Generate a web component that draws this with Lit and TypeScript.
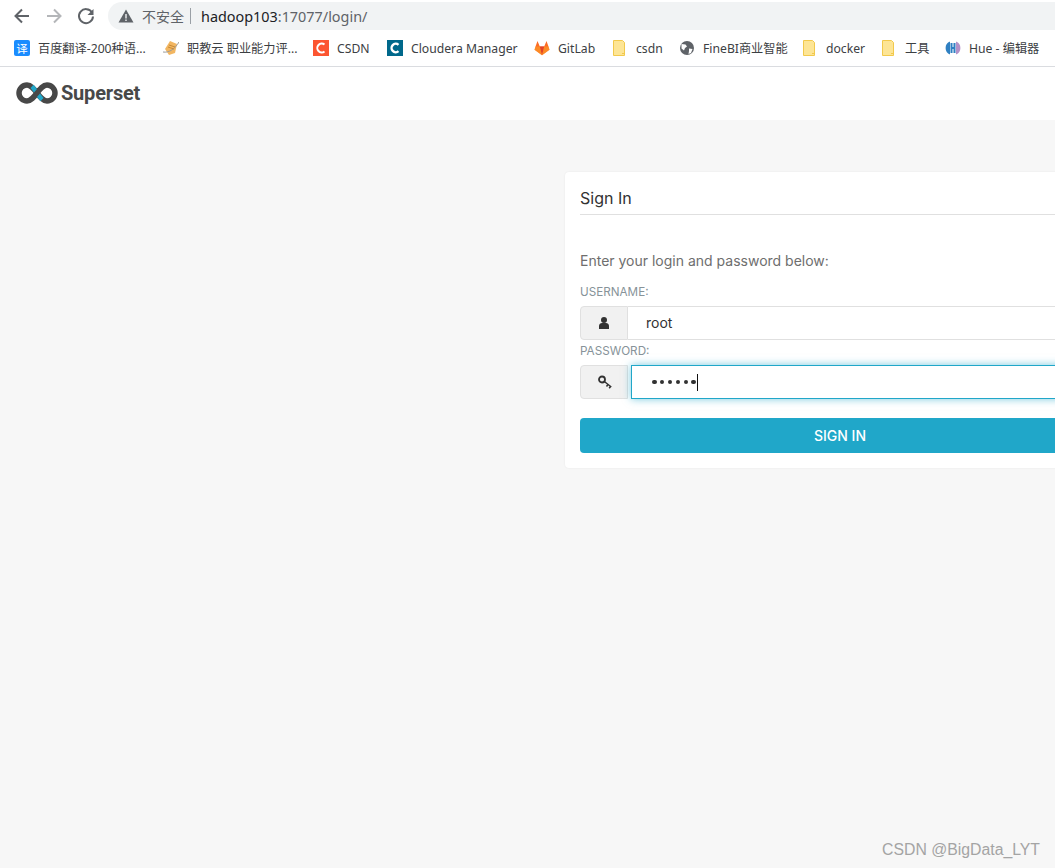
import { LitElement, html, css, svg } from "lit";
import { customElement } from "lit/decorators.js";

const folder = svg`<path d="M1.500 0.500h9l2 2v13h-11z" fill="#fde595" stroke="#f2c94c" stroke-width="1"/><path d="M10 13.500h2.500" stroke="#f2c94c"/>`;
const icons: Record<string, any> = {
  fanyi: svg`<rect x="0" y="0" width="16" height="16" rx="2" fill="#1a8cff"/><text x="8" y="12.500" font-size="11.500" fill="#fff" text-anchor="middle" font-family="Noto Sans CJK SC">译</text>`,
  zhijiao: svg`<path d="M2 9l5-8 7 3-2 9-6 2z" fill="#f2b661"/><path d="M0 12c6 1 12-3 16-10" stroke="#9a9a9a" fill="none"/><path d="M5 7l6 2M6 5l6 2" stroke="#c98a35"/>`,
  csdn: svg`<rect width="16" height="16" fill="#fc5531"/><path d="M11.500 4.600A4.400 4.400 0 1 0 11.500 11.400" stroke="#fff" stroke-width="2" fill="none"/>`,
  cloudera: svg`<rect width="16" height="16" fill="#00688b"/><path d="M11.500 4.800A4.200 4.200 0 1 0 11.500 11.200" stroke="#fff" stroke-width="2.400" fill="none"/>`,
  gitlab: svg`<path d="M8 15.200L.5 9.800l1-3.300L3.500 1l2.300 5.500h4.400L12.500 1l2 5.500 1 3.300z" fill="#fc6d26"/><path d="M8 15.200L5.800 6.500h4.400z" fill="#e24329"/><path d="M8 15.200L.5 9.800l1-3.300h4.300zM8 15.200l7.500-5.400-1-3.300h-4.300z" fill="#fca326" opacity=".55"/>`,
  folder,
  globe: svg`<circle cx="8" cy="8" r="7" fill="#5f6368"/><path d="M2.500 4l4 .5 1.500 2-2 1.500-1 2.500-2.500-2zM10 8.500l3.500.5-1.500 4-2.500 1 .5-3z" fill="#fff"/>`,
  hue: svg`<path d="M5 1.500A7 7 0 0 0 5 14.500z" fill="#2f80c2"/><path d="M11 1.500A7 7 0 0 1 11 14.500z" fill="#b491c8"/><path d="M6.500 3v10M9.500 3v10M6.500 8h3" stroke="#2f80c2" stroke-width="2"/>`,
};

const bookmarks = [
  { i: "fanyi", t: "百度翻译-200种语...", w: 149 },
  { i: "zhijiao", t: "职教云 职业能力评...", w: 150 },
  { i: "csdn", t: "CSDN", w: 74 },
  { i: "cloudera", t: "Cloudera Manager", w: 147 },
  { i: "gitlab", t: "GitLab", w: 78 },
  { i: "folder", t: "csdn", w: 67 },
  { i: "globe", t: "FineBI商业智能", w: 123 },
  { i: "folder", t: "docker", w: 79 },
  { i: "folder", t: "工具", w: 64 },
  { i: "hue", t: "Hue - 编辑器", w: 110 },
];

@customElement("app-root")
export class AppRoot extends LitElement {
  static styles = css`
    :host {
      display: block;
      position: relative;
      width: 1055px;
      height: 868px;
      overflow: hidden;
      background: #f7f7f7;
      font-family: Inter, "Noto Sans CJK SC", sans-serif;
    }
    .chrome {
      background: #fff;
      height: 66px;
      border-bottom: 1px solid #dadce0;
    }
    .toolbar {
      height: 32px;
      display: flex;
      align-items: flex-start;
      padding-left: 12px;
    }
    .nav-btns {
      display: flex;
      gap: 12px;
      padding-top: 6px;
    }
    .nav-btns svg {
      display: block;
      width: 20px;
      height: 20px;
    }
    .omnibox {
      margin: 2px 0 0 12px;
      flex: 1;
      height: 28px;
      background: #f1f3f4;
      border-radius: 14px 0 0 14px;
      display: flex;
      align-items: center;
      padding-left: 10px;
      font-family: "Noto Sans", "Noto Sans CJK SC", sans-serif;
      font-size: 14.4px;
      color: #5f6368;
    }
    .omnibox svg {
      width: 16px;
      height: 16px;
      margin-right: 8px;
    }
    .lock {
      font-size: 14px;
    }
    .sep {
      width: 1px;
      height: 16px;
      background: #9aa0a6;
      margin: 0 10px 0 6px;
    }
    .host {
      color: #202124;
    }
    .bookmarks {
      height: 32px;
      display: flex;
      align-items: center;
      padding-left: 14px;
      font-family: "Noto Sans", "Noto Sans CJK SC", sans-serif;
      font-size: 12.2px;
      color: #3c4043;
    }
    .bm {
      display: flex;
      align-items: center;
      gap: 8px;
      flex: none;
      white-space: nowrap;
    }
    .bm svg {
      width: 16px;
      height: 16px;
      flex: none;
    }
    .navbar {
      height: 53px;
      background: #fff;
      display: flex;
      align-items: center;
      padding: 0 0 2px 16px;
      box-sizing: border-box;
      gap: 3px;
    }
    .navbar svg {
      width: 42px;
      height: 22px;
      display: block;
    }
    .brand {
      font-family: Roboto, sans-serif;
      font-weight: 700;
      font-size: 20px;
      letter-spacing: -0.2px;
      color: #484848;
    }
    .card {
      box-sizing: border-box;
      width: 550px;
      margin: 52px 0 0 565px;
      height: 296px;
      background: #fff;
      border-radius: 4px;
      box-shadow: 0 0 2px rgba(0, 0, 0, 0.08);
      padding: 15px;
    }
    .title {
      font-size: 16px;
      line-height: 22px;
      height: 27px;
      color: #323232;
      border-bottom: 1px solid #e0e0e0;
    }
    .intro {
      margin-top: 36px;
      font-size: 14px;
      line-height: 20px;
      color: #6e6e6e;
    }
    .label {
      font-size: 11.7px;
      line-height: 16px;
      color: #879399;
      margin-top: 13px;
    }
    .label.second {
      margin-top: 3px;
    }
    .group {
      display: flex;
      height: 34px;
      margin-top: 6px;
    }
    .addon {
      box-sizing: border-box;
      width: 48px;
      flex: none;
      background: #f1f1f1;
      border: 1px solid #e0e0e0;
      border-radius: 4px 0 0 4px;
      display: flex;
      align-items: center;
      justify-content: center;
    }
    .addon svg {
      width: 14px;
      height: 14px;
    }
    .key {
      margin-left: 2px;
    }
    .field {
      box-sizing: border-box;
      flex: 1;
      border: 1px solid #e0e0e0;
      border-left: none;
      padding: 0 0 2px 18px;
      display: flex;
      align-items: center;
      font-size: 14px;
      color: #323232;
    }
    .field.focus {
      margin-left: 3px;
      border: 1px solid #20a7c9;
      padding: 0 0 0 20px;
      box-shadow: 0 0 8px rgba(32, 167, 201, 0.6);
    }
    .caret {
      width: 1px;
      height: 17px;
      margin-left: 1px;
      background: #111;
    }
    .dots {
      display: flex;
      gap: 3.4px;
    }
    .dot {
      width: 4.5px;
      height: 4.5px;
      border-radius: 50%;
      background: #323232;
    }
    .btn {
      margin-top: 19px;
      height: 35px;
      background: #20a7c9;
      border-radius: 4px;
      color: #fff;
      font-size: 14px;
      font-weight: 500;
      display: flex;
      align-items: center;
      justify-content: center;
    }
    .watermark {
      position: absolute;
      right: 15px;
      bottom: 9px;
      font-family: "Liberation Sans", sans-serif;
      font-size: 15.8px;
      color: #a4a4a4;
    }
  `;

  render() {
    return html`
      <div class="chrome">
        <div class="toolbar">
          <div class="nav-btns">
            <svg viewBox="0 0 20 20"><path d="M17 10H4.500M10 3.500L3.500 10l6.500 6.500" fill="none" stroke="#5f6368" stroke-width="2"/></svg>
            <svg viewBox="0 0 20 20"><path d="M3 10h12.500M10 3.500l6.500 6.500-6.500 6.500" fill="none" stroke="#b4b6b9" stroke-width="2"/></svg>
            <svg viewBox="0 0 20 20"><path d="M16 6.500A7 7 0 1 0 17 10.500" fill="none" stroke="#5f6368" stroke-width="2"/><path d="M17.500 3v6h-6z" fill="#5f6368"/></svg>
          </div>
          <div class="omnibox">
            <svg viewBox="0 0 16 16"><path d="M8 1.500L15.500 14.500H.5z" fill="#5f6368"/><path d="M8 6v4.500M8 11.500v1.500" stroke="#f1f3f4" stroke-width="1.400"/></svg>
            <span class="lock">不安全</span><span class="sep"></span><span class="host">hadoop103</span><span>:17077/login/</span>
          </div>
        </div>
        <div class="bookmarks">
          ${bookmarks.map(
            (b) => html`<div class="bm" style="width:${b.w}px">
              <svg viewBox="0 0 16 16">${icons[b.i]}</svg><span>${b.t}</span>
            </div>`
          )}
        </div>
      </div>
      <div class="navbar">
        <svg viewBox="0 0 42 22">
          <path d="M21 11c-3-4-6-8-10-8a8 8 0 0 0 0 16c4 0 7-4 10-8s6-8 10-8a8 8 0 0 1 0 16c-4 0-7-4-10-8z" fill="none" stroke="#484848" stroke-width="5.500"/>
          <path d="M14.500 6l3.500 4.500 3-3.500-3.500-4.200zM27.500 16l-3.500-4.500-3 3.500 3.500 4.200z" fill="#20a7c9"/>
        </svg>
        <span class="brand">Superset</span>
      </div>
      <div class="card">
        <div class="title">Sign In</div>
        <div class="intro">Enter your login and password below:</div>
        <div class="label">USERNAME:</div>
        <div class="group">
          <div class="addon">
            <svg viewBox="0 0 14 14"><circle cx="7" cy="4" r="3" fill="#323232"/><path d="M2 13v-3c0-2 1.500-3 3-3h4c1.500 0 3 1 3 3v3z" fill="#323232"/></svg>
          </div>
          <div class="field">root</div>
        </div>
        <div class="label second">PASSWORD:</div>
        <div class="group">
          <div class="addon">
            <svg class="key" viewBox="0 0 14 14"><circle cx="4" cy="4.500" r="3" fill="none" stroke="#323232" stroke-width="1.800"/><path d="M6.300 6.500l7 5.500M10 9.500l-1.500 2M12.500 11.500l-1.300 1.800" fill="none" stroke="#323232" stroke-width="1.500"/></svg>
          </div>
          <div class="field focus">
            <span class="dots"><i class="dot"></i><i class="dot"></i><i class="dot"></i><i class="dot"></i><i class="dot"></i><i class="dot"></i></span><span class="caret"></span>
          </div>
        </div>
        <div class="btn">SIGN IN</div>
      </div>
      <div class="watermark">CSDN @BigData_LYT</div>
    `;
  }
}
